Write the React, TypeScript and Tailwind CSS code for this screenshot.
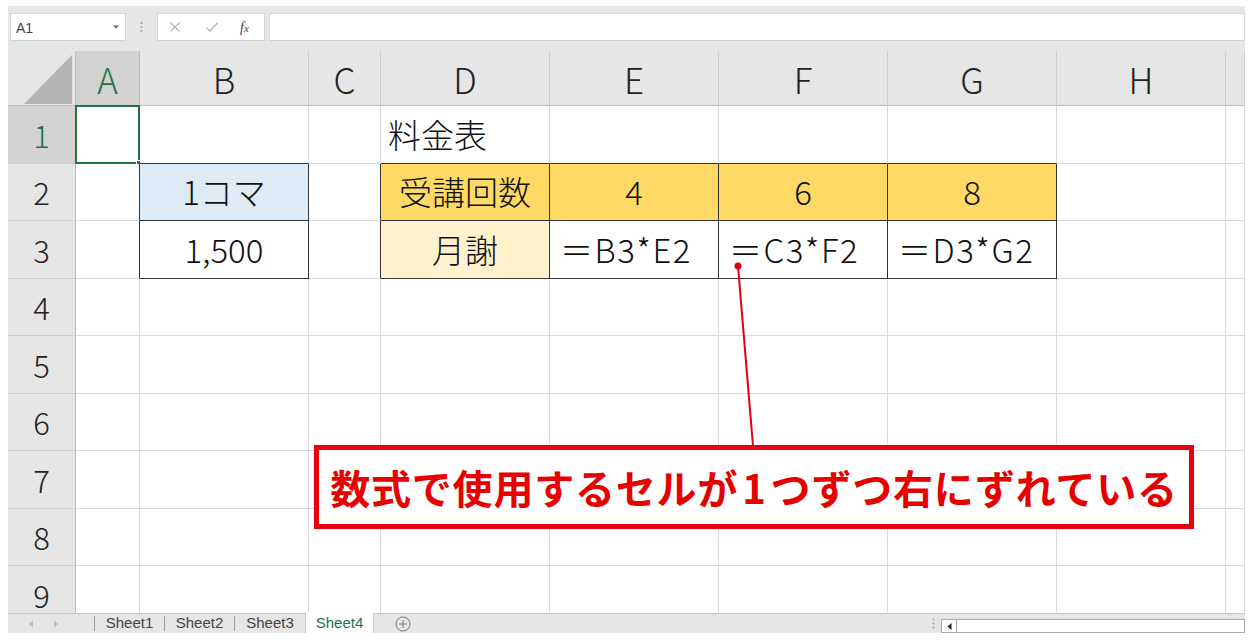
import React from "react";

const FONT = '"Noto Sans CJK JP", "Noto Sans", sans-serif';
const LETTERS = ["A", "B", "C", "D", "E", "F", "G", "H", ""];

type CellDef = { text?: string; bg?: string; align?: "left" | "center" | "formula" };

const data: Record<string, CellDef> = {
  "1-3": { text: "料金表", align: "left" },
  "2-1": { text: "1コマ", bg: "bg-[#ddebf7]" },
  "3-1": { text: "1,500" },
  "2-3": { text: "受講回数", bg: "bg-[#ffd966]" },
  "2-4": { text: "4", bg: "bg-[#ffd966]" },
  "2-5": { text: "6", bg: "bg-[#ffd966]" },
  "2-6": { text: "8", bg: "bg-[#ffd966]" },
  "3-3": { text: "月謝", bg: "bg-[#fff2cc]" },
  "3-4": { text: "＝B3*E2", align: "formula" },
  "3-5": { text: "＝C3*F2", align: "formula" },
  "3-6": { text: "＝D3*G2", align: "formula" },
};

const rightBlack = new Set([
  "2-0", "3-0", "2-1", "3-1", "2-2", "3-2",
  "2-3", "2-4", "2-5", "2-6", "3-3", "3-4", "3-5", "3-6",
]);
const bottomBlack = new Set([
  "1-1", "2-1", "3-1",
  "1-3", "1-4", "1-5", "1-6", "2-3", "2-4", "2-5", "2-6", "3-3", "3-4", "3-5", "3-6",
]);

function Cell({ r, c }: { r: number; c: number }) {
  const key = `${r}-${c}`;
  const d = data[key] || {};
  const cls = [
    "relative flex items-center border-r border-b border-[#dadada] text-[33px] font-light leading-none text-[#111] overflow-visible whitespace-nowrap",
    d.bg || "bg-white",
    d.align === "left"
      ? "justify-start pl-[7px]"
      : d.align === "formula"
      ? "justify-start pl-[10px] tracking-[1.5px]"
      : "justify-center",
    rightBlack.has(key) ? "border-r-[#333]" : "",
    bottomBlack.has(key) ? "border-b-[#333]" : "",
  ].join(" ");
  return (
    <div className={cls}>
      {d.text}
      {key === "1-0" && (
        <div className="absolute -left-px -top-px w-[65px] h-[59px] border-2 border-[#217346]">
          <div className="absolute -right-[4px] -bottom-[4px] w-[6px] h-[6px] bg-[#217346] border border-white" />
        </div>
      )}
    </div>
  );
}

export default function App() {
  const rows = [1, 2, 3, 4, 5, 6, 7, 8, 9];
  return (
    <div
      className="relative w-[1251px] h-[643px] bg-white overflow-hidden"
      style={{ fontFamily: FONT }}
    >
      <div className="ml-[8px] mt-[6px] w-[1237px] bg-[#e6e6e6] flex flex-col">
        {/* formula bar */}
        <div className="h-[45px] flex items-start pt-[7px]">
          <div className="ml-[2px] w-[116px] h-[28px] bg-white border border-[#d4d4d4] flex items-center justify-between px-[5px]">
            <span className="text-[14px] text-[#444] pt-[3px]" style={{ fontFamily: '"Liberation Sans", sans-serif' }}>A1</span>
            <svg width="8" height="6" viewBox="0 0 8 6"><path d="M1 1.5 L4 4.5 L7 1.5 Z" fill="#666" /></svg>
          </div>
          <div className="w-[31px] h-[28px] flex items-center justify-center">
            <svg width="3" height="12" viewBox="0 0 3 12">
              <circle cx="1.5" cy="2" r="1" fill="#a0a0a0" />
              <circle cx="1.5" cy="6" r="1" fill="#a0a0a0" />
              <circle cx="1.5" cy="10" r="1" fill="#a0a0a0" />
            </svg>
          </div>
          <div className="w-[108px] h-[28px] bg-white border border-[#d4d4d4] flex items-center">
            <svg className="ml-[11px]" width="12" height="12" viewBox="0 0 12 12">
              <path d="M1.5 1.5 L10.5 10.5 M10.5 1.5 L1.5 10.5" stroke="#b5b5b5" strokeWidth="1.2" />
            </svg>
            <svg className="ml-[24px]" width="14" height="12" viewBox="0 0 14 12">
              <path d="M1.5 6.5 L5 10 L12.5 2" stroke="#b5b5b5" strokeWidth="1.4" fill="none" />
            </svg>
            <span className="ml-[21px] text-[14px] italic text-[#444]" style={{ fontFamily: '"Liberation Serif", serif' }}>
              <i>f</i><span className="text-[11px]">x</span>
            </span>
          </div>
          <div className="ml-[4px] flex-1 h-[28px] bg-white border border-[#d4d4d4]" />
        </div>

        {/* sheet grid */}
        <div className="h-[562px] overflow-hidden">
          <div className="grid grid-cols-[68px_64px_169px_72px_169px_169px_169px_169px_169px_1fr] grid-rows-[55px_repeat(9,57.5px)]">
            {/* corner */}
            <div className="relative border-r border-b border-[#bdbdbd] bg-[#e6e6e6]">
              <svg className="absolute left-[16px] top-[4px]" width="48" height="49" viewBox="0 0 48 49">
                <path d="M0 49 L48 49 L48 0 Z" fill="#b4b4b4" />
              </svg>
            </div>
            {LETTERS.map((l, i) => (
              <div
                key={l + i}
                className={
                  i === 0
                    ? "flex items-center justify-center border-r border-b border-[#bdbdbd] bg-[#d2d2d2] text-[#217346] text-[35px] font-light leading-none"
                    : "flex items-center justify-center border-r border-b border-[#bdbdbd] border-r-[#cfcfcf] bg-[#e6e6e6] text-[#222] text-[35px] font-light leading-none"
                }
              >
                {l}
              </div>
            ))}
            {rows.map((r) => (
              <React.Fragment key={r}>
                <div
                  className={
                    r === 1
                      ? "flex items-center justify-center border-r border-b border-[#bdbdbd] border-b-[#cfcfcf] bg-[#d2d2d2] text-[#217346] text-[31px] font-light leading-none"
                      : "flex items-center justify-center border-r border-b border-[#bdbdbd] border-b-[#cfcfcf] bg-[#e6e6e6] text-[#222] text-[31px] font-light leading-none"
                  }
                >
                  {r}
                </div>
                {[0, 1, 2, 3, 4, 5, 6, 7, 8].map((c) => (
                  <Cell key={c} r={r} c={c} />
                ))}
              </React.Fragment>
            ))}
          </div>
        </div>

        {/* tab bar */}
        <div
          className="h-[20px] flex items-stretch border-t border-[#c8c8c8] bg-[#e6e6e6] text-[15px] text-[#444]"
          style={{ fontFamily: '"Liberation Sans", "Noto Sans", sans-serif' }}
        >
          <div className="w-[87px] flex items-center border-r border-[#9a9a9a] my-[2px]">
            <svg className="ml-[20px]" width="6" height="8" viewBox="0 0 6 8"><path d="M5 0.5 L1 4 L5 7.5 Z" fill="#c0c0c0" /></svg>
            <svg className="ml-[19px]" width="6" height="8" viewBox="0 0 6 8"><path d="M1 0.5 L5 4 L1 7.5 Z" fill="#c0c0c0" /></svg>
          </div>
          <div className="w-[70px] flex items-center justify-center border-r border-[#9a9a9a] my-[2px]">Sheet1</div>
          <div className="w-[70px] flex items-center justify-center border-r border-[#9a9a9a] my-[2px]">Sheet2</div>
          <div className="w-[70px] flex items-center justify-center my-[2px]">Sheet3</div>
          <div className="w-[69px] -mt-px flex items-center justify-center bg-white text-[#217346] border-x border-[#c8c8c8]">Sheet4</div>
          <div className="w-[58px] flex items-center justify-center">
            <svg width="16" height="16" viewBox="0 0 16 16">
              <circle cx="8" cy="8" r="7" fill="none" stroke="#777" strokeWidth="1" />
              <path d="M8 4 V12 M4 8 H12" stroke="#777" strokeWidth="1" />
            </svg>
          </div>
          <div className="flex-1" />
          <div className="w-[16px] flex items-center justify-center">
            <svg width="3" height="11" viewBox="0 0 3 11">
              <circle cx="1.5" cy="1.5" r="1" fill="#a8a8a8" />
              <circle cx="1.5" cy="5.5" r="1" fill="#a8a8a8" />
              <circle cx="1.5" cy="9.5" r="1" fill="#a8a8a8" />
            </svg>
          </div>
          <div className="w-[304px] mt-[5px] bg-white border border-[#ababab] flex">
            <div className="w-[15px] border-r border-[#ababab] flex items-center justify-center">
              <svg width="5" height="7" viewBox="0 0 5 7"><path d="M4.5 0 L0.5 3.5 L4.5 7 Z" fill="#222" /></svg>
            </div>
          </div>
        </div>
      </div>

      {/* annotation overlay */}
      <svg className="absolute left-0 top-0 pointer-events-none" width="1251" height="643" viewBox="0 0 1251 643">
        <line x1="738" y1="266" x2="753" y2="446" stroke="#e00012" strokeWidth="2" />
        <circle cx="738" cy="266" r="3.5" fill="#e00012" />
      </svg>
      <div className="absolute left-[314px] top-[445px] w-[880px] h-[84px] bg-white border-[5px] border-[#e60012] flex items-center justify-center">
        <span className="text-[40px] font-bold leading-none text-[#e60000] tracking-[0.8px] whitespace-nowrap">
          数式で使用するセルが<span className="mx-[4px]">1</span>つずつ右にずれている
        </span>
      </div>
    </div>
  );
}
